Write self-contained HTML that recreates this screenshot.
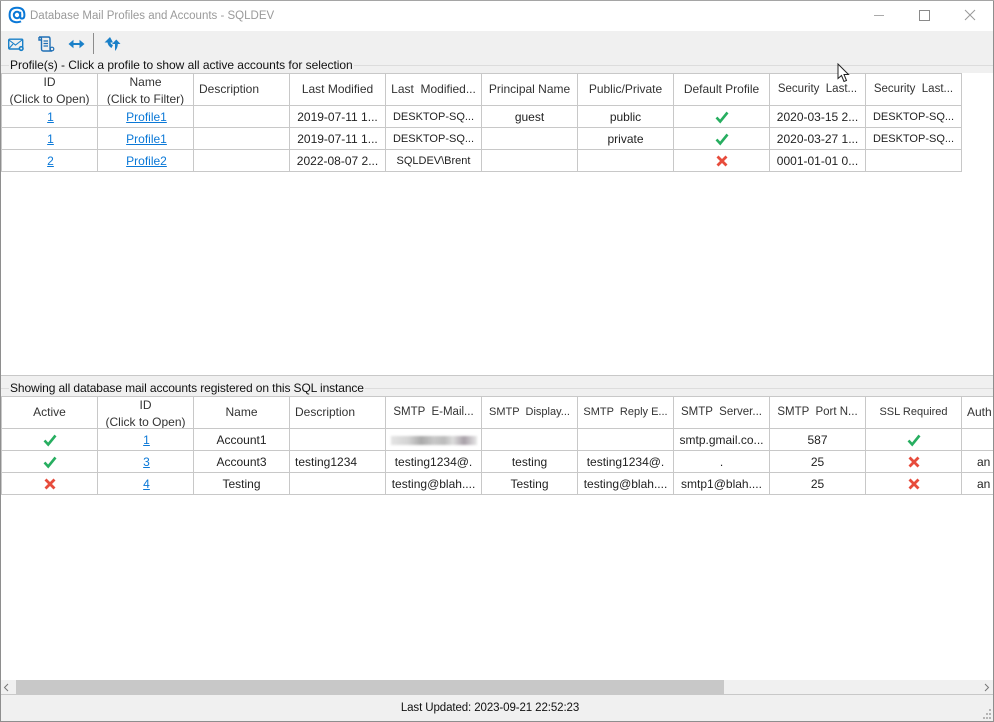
<!DOCTYPE html>
<html><head><meta charset="utf-8"><title>Database Mail Profiles and Accounts - SQLDEV</title>
<style>
html,body{margin:0;padding:0;background:#fff}
body{width:994px;height:722px;position:relative;overflow:hidden;font:12px "Liberation Sans",sans-serif;color:#222}
.a{position:absolute}
table{position:absolute;left:1px;border-collapse:collapse;table-layout:fixed;background:#fff}
td{border:1px solid #c8c8c8;padding:1px 0 0;text-align:center;overflow:hidden;white-space:nowrap;width:95px;height:20px;line-height:15px;font-size:12px}
tr.h td{height:31px;padding:0;line-height:15px;color:#333}
tr.h td div{height:30px;line-height:17px;position:relative;top:-1px}
td.l,tr.h td.l{text-align:left;padding-left:5px;width:90px}
td a{color:#0a78d7;text-decoration:underline;position:relative;left:1px}
td svg{display:block;margin:0 auto}
td.n{font-size:11px}
td.m{font-size:11.5px}
.band{background:#f0f0f0;left:1px;width:992px}
.line{background:#dcdcdc;height:1px}
.gl{left:10px;background:#f0f0f0;color:#111;line-height:14px;font-size:12px;white-space:nowrap}
</style></head><body>
<svg width="0" height="0" style="position:absolute"><defs>
<symbol id="ok" viewBox="0 0 14 14"><path d="M1.5 7.5L5.2 11.5L12.5 2.5" fill="none" stroke="#27ae60" stroke-width="2.6"/></symbol>
<symbol id="no" viewBox="0 0 14 14"><path d="M2.5 2.5L11.5 11.5M11.5 2.5L2.5 11.5" fill="none" stroke="#e74c3c" stroke-width="2.8"/></symbol>
</defs></svg>

<!-- Title bar -->
<svg class="a" style="left:8px;top:6px" width="18" height="18" viewBox="0 0 18 18"><circle cx="9" cy="9" r="3.2" fill="none" stroke="#0a78d7" stroke-width="2"/><path d="M12.2 5.8V10.5Q12.2 12.6 14 12.6Q16.4 12.6 16.4 9Q16.4 1.8 9 1.8Q1.6 1.8 1.6 9Q1.6 16.2 9 16.2Q11.4 16.2 13 15.4" fill="none" stroke="#0a78d7" stroke-width="2"/></svg>
<div class="a" style="left:30px;top:9px;color:#9a9a9a;font-size:11.5px;line-height:15px;white-space:nowrap">Database Mail Profiles and Accounts - SQLDEV</div>
<div class="a" style="left:874px;top:15px;width:10px;height:1px;background:#aaa"></div>
<div class="a" style="left:919px;top:10px;width:9px;height:9px;border:1px solid #8a8a8a"></div>
<svg class="a" style="left:964px;top:9px" width="12" height="12"><path d="M1 1L11 11M11 1L1 11" stroke="#999" fill="none"/></svg>

<!-- Top band -->
<div class="a band" style="top:31px;height:42px"></div>
<svg class="a" style="left:8px;top:37px" width="17" height="15" viewBox="0 0 17 15"><rect x="0.7" y="2.2" width="14" height="9.8" rx="1" fill="none" stroke="#1a80c8" stroke-width="1.4"/><path d="M1 3L7.5 8L14 3M1 11.5L5 7" fill="none" stroke="#1a80c8" stroke-width="1.1"/><circle cx="13.2" cy="11.5" r="2.6" fill="#1a80c8"/><circle cx="13.2" cy="11.5" r="1" fill="#f0f0f0"/></svg>
<svg class="a" style="left:38px;top:36px" width="17" height="16" viewBox="0 0 17 16"><path d="M1 1H10.5Q12 1 12 3V13Q12 15 14 15H5.5Q3.5 15 3.5 13V3Q3.5 1 1 1ZM1 1V4H3.5" fill="none" stroke="#1f6fb5" stroke-width="1.4"/><path d="M5.5 5H10M5.5 7.5H10M5.5 10H10" stroke="#1f6fb5" stroke-width="1.2"/><circle cx="14" cy="13" r="1.8" fill="none" stroke="#1f6fb5" stroke-width="1.2"/></svg>
<svg class="a" style="left:68px;top:38px" width="17" height="12" viewBox="0 0 17 12"><path d="M3 6H14" stroke="#1a80c8" stroke-width="2"/><path d="M0.5 6L5.5 1.8V10.2ZM16.5 6L11.5 1.8V10.2Z" fill="#1a80c8"/></svg>
<div class="a" style="left:93px;top:33px;width:1px;height:21px;background:#8c8c8c"></div>
<svg class="a" style="left:104px;top:36px" width="17" height="16" viewBox="0 0 17 16"><path d="M6 1L0.5 6.5L3.5 6.5Q4 10 7.5 12L9 9Q6.5 8 6.5 6.5H9Z" fill="#1a80c8"/><path d="M11 15V8H8L12.3 3.5L16.5 8H13.8Q13.8 12 11 15Z" fill="#1a80c8"/></svg>
<div class="a line" style="left:1px;top:65px;width:992px"></div>
<div class="a gl" style="top:58px;padding:0 1px;left:9px;letter-spacing:-.03px">Profile(s) - Click a profile to show all active accounts for selection</div>

<table style="top:73px">
<tr class="h"><td><div>ID<br>(Click to Open)</div></td><td><div>Name<br>(Click to Filter)</div></td><td class="l">Description</td><td>Last Modified</td><td>Last &nbsp;Modified...</td><td>Principal Name</td><td>Public/Private</td><td>Default Profile</td><td class="m">Security &nbsp;Last...</td><td class="m">Security &nbsp;Last...</td></tr>
<tr><td><a>1</a></td><td><a>Profile1</a></td><td></td><td>2019-07-11 1...</td><td class="n">DESKTOP-SQ...</td><td>guest</td><td>public</td><td><svg width="14" height="14"><use href="#ok"/></svg></td><td>2020-03-15 2...</td><td class="n">DESKTOP-SQ...</td></tr>
<tr><td><a>1</a></td><td><a>Profile1</a></td><td></td><td>2019-07-11 1...</td><td class="n">DESKTOP-SQ...</td><td></td><td>private</td><td><svg width="14" height="14"><use href="#ok"/></svg></td><td>2020-03-27 1...</td><td class="n">DESKTOP-SQ...</td></tr>
<tr><td><a>2</a></td><td><a>Profile2</a></td><td></td><td>2022-08-07 2...</td><td class="n">SQLDEV\Brent</td><td></td><td></td><td><svg width="14" height="14"><use href="#no"/></svg></td><td>0001-01-01 0...</td><td></td></tr>
</table>

<!-- Bottom band -->
<div class="a" style="left:1px;top:375px;width:992px;height:1px;background:#c8c8c8"></div>
<div class="a band" style="top:376px;height:20px"></div>
<div class="a line" style="left:1px;top:388px;width:992px"></div>
<div class="a gl" style="top:381px;padding:0 1px;left:9px;letter-spacing:-.11px">Showing all database mail accounts registered on this SQL instance</div>

<div class="a" style="left:1px;top:396px;width:992px;height:284px;overflow:hidden">
<table style="top:0;left:0;width:1057px">
<tr class="h"><td>Active</td><td><div>ID<br>(Click to Open)</div></td><td>Name</td><td class="l">Description</td><td class="m">SMTP &nbsp;E-Mail...</td><td class="n">SMTP &nbsp;Display...</td><td class="n">SMTP &nbsp;Reply E...</td><td class="m">SMTP &nbsp;Server...</td><td class="m">SMTP &nbsp;Port N...</td><td class="n">SSL Required</td><td class="l">Auth</td></tr>
<tr><td><svg width="14" height="14"><use href="#ok"/></svg></td><td><a>1</a></td><td>Account1</td><td></td><td><div style="margin:0 auto;width:86px;height:9px;background:linear-gradient(90deg,#e4e4e4,#d4d4d4 20%,#aaa 35%,#c8c8c8 50%,#bbb 62%,#ddd 72%,#a8a0a8 85%,#e8e8e8);filter:blur(1px)"></div></td><td></td><td></td><td>smtp.gmail.co...</td><td>587</td><td><svg width="14" height="14"><use href="#ok"/></svg></td><td></td></tr>
<tr><td><svg width="14" height="14"><use href="#ok"/></svg></td><td><a>3</a></td><td>Account3</td><td class="l">testing1234</td><td>testing1234@.</td><td>testing</td><td>testing1234@.</td><td>.</td><td>25</td><td><svg width="14" height="14"><use href="#no"/></svg></td><td class="l">&nbsp; &nbsp;an</td></tr>
<tr><td><svg width="14" height="14"><use href="#no"/></svg></td><td><a>4</a></td><td>Testing</td><td></td><td>testing@blah....</td><td>Testing</td><td>testing@blah....</td><td>smtp1@blah....</td><td>25</td><td><svg width="14" height="14"><use href="#no"/></svg></td><td class="l">&nbsp; &nbsp;an</td></tr>
</table>
</div>

<!-- Scrollbar -->
<div class="a" style="left:1px;top:680px;width:992px;height:14px;background:#f0f0f0"></div>
<div class="a" style="left:16px;top:680px;width:708px;height:15px;background:#c8c8c8"></div>
<svg class="a" style="left:3px;top:683px" width="6" height="9"><path d="M5 1L1.5 4.5L5 8" fill="none" stroke="#777"/></svg>
<svg class="a" style="left:984px;top:683px" width="6" height="9"><path d="M1 1L4.5 4.5L1 8" fill="none" stroke="#777"/></svg>

<!-- Status -->
<div class="a" style="left:1px;top:695px;width:992px;height:26px;background:#f0f0f0"></div>
<div class="a" style="left:1px;top:694px;width:992px;height:1px;background:#c8c8c8"></div>
<div class="a" style="left:-6px;top:701px;width:992px;text-align:center;line-height:15px;color:#111;font-size:11.5px;letter-spacing:-.1px">Last Updated: 2023-09-21 22:52:23</div>
<svg class="a" style="left:981px;top:708px" width="11" height="12"><path d="M8 1h2v2h-2zM5 5h2v2h-2zM8 5h2v2h-2zM2 9h2v2h-2zM5 9h2v2h-2zM8 9h2v2h-2z" fill="#b5b5b5"/></svg>

<!-- Window border -->
<div class="a" style="left:0;top:0;width:1px;height:722px;background:#8e8e8e"></div>
<div class="a" style="left:993px;top:0;width:1px;height:722px;background:#8e8e8e"></div>
<div class="a" style="left:0;top:0;width:994px;height:1px;background:#a5a5a5"></div>
<div class="a" style="left:0;top:721px;width:994px;height:1px;background:#8e8e8e"></div>

<!-- Cursor -->
<svg class="a" style="left:837px;top:63px" width="13" height="20" viewBox="0 0 13 20"><path d="M1 1V15.5L4.5 12.5L7 18.5L9.5 17.5L7 11.5H11.5Z" fill="#fff" stroke="#222" stroke-width="1"/></svg>
</body></html>
